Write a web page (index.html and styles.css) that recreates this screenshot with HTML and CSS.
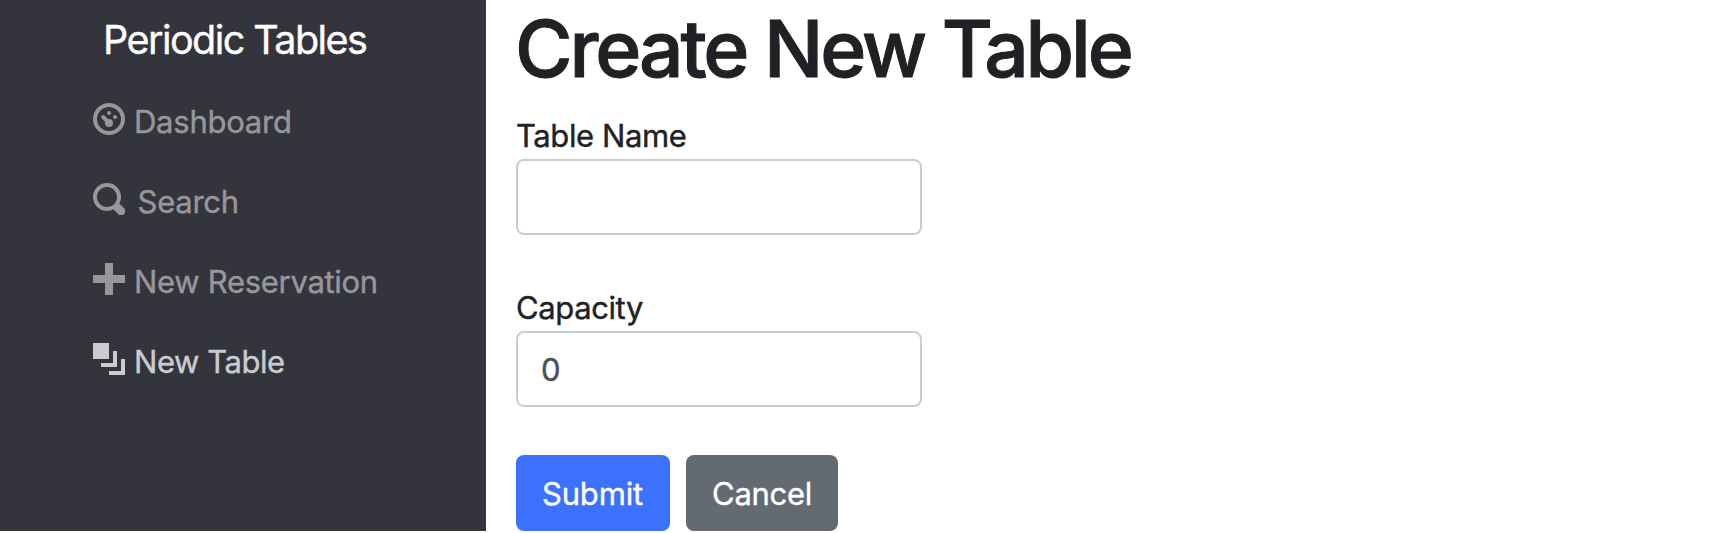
FILE: index.html
```html
<!DOCTYPE html>
<html lang="en">
<head>
<meta charset="utf-8">
<title>Periodic Tables</title>
<link rel="stylesheet" href="styles.css">
</head>
<body>
<div class="layout">
  <nav class="sidebar">
    <a class="brand">Periodic Tables</a>
    <ul class="menu">
      <li class="item"><svg class="icon" viewBox="0 0 8 8"><circle class="line" cx="4" cy="4" r="3.5"/><path class="line needle" d="M2.55 3.5l1.4 1.4"/><circle cx="4" cy="5" r="1"/><circle cx="4" cy="2.5" r=".5"/><circle cx="5.5" cy="3.5" r=".5"/></svg><span class="text dashboard">Dashboard</span></li>
      <li class="item"><svg class="icon" viewBox="0 0 8 8"><path d="M3.5 0c-1.93 0-3.5 1.57-3.5 3.5s1.57 3.5 3.5 3.5c.59 0 1.17-.14 1.66-.41a1 1 0 0 0 .13.13l1 1a1.02 1.02 0 1 0 1.44-1.44l-1-1a1 1 0 0 0-.16-.13c.27-.49.44-1.06.44-1.66 0-1.93-1.55-3.5-3.5-3.5zm0 1c1.39 0 2.5 1.11 2.5 2.5 0 .66-.24 1.27-.66 1.72l-.03.03a1 1 0 0 0-.13.13c-.44.4-1.04.63-1.69.63-1.39 0-2.5-1.11-2.5-2.5s1.11-2.5 2.5-2.5z"/></svg><span class="text search">Search</span></li>
      <li class="item"><svg class="icon" viewBox="0 0 8 8"><path d="M3 0v3h-3v2h3v3h2v-3h3v-2h-3v-3h-2z"/></svg><span class="text reservation">New Reservation</span></li>
      <li class="item active"><svg class="icon" viewBox="0 0 8 8"><path d="M0 0v4h4v-4h-4zm5 2v3h-3v1h4v-4h-1zm2 2v3h-3v1h4v-4h-1z"/></svg><span class="text table">New Table</span></li>
    </ul>
  </nav>
  <main class="content">
    <h1 class="title">Create New Table</h1>
    <form class="form">
      <label class="label name" for="table_name">Table Name</label>
      <input class="field" id="table_name" type="text">
      <label class="label capacity" for="capacity">Capacity</label>
      <input class="field" id="capacity" type="text" value="0">
      <div class="actions">
        <button class="btn submit" type="button">Submit</button>
        <button class="btn cancel" type="button">Cancel</button>
      </div>
    </form>
  </main>
</div>
</body>
</html>
```
FILE: styles.css
```css
* { box-sizing: border-box; }
body {
  margin: 0;
  background: #fff;
  color: #212529;
  font: 400 31px/48px Inter, sans-serif;
  -webkit-text-stroke: .4px currentColor;
  overflow: hidden;
}
.layout { display: flex; height: 531px; }
.sidebar {
  width: 486px;
  flex: none;
  padding-top: 10px;
  background: #34343c;
}
.brand {
  display: block;
  margin-left: 103px;
  font-size: 39.5px;
  line-height: 60px;
  letter-spacing: -1.55px;
  color: #fff;
}
.menu { list-style: none; margin: 12px 0 0; padding: 0 0 0 93px; }
.item {
  display: flex;
  align-items: flex-start;
  height: 80px;
  padding-top: 16px;
  color: #97979b;
}
.active { color: #cbccce; }
.icon { width: 32px; height: 32px; margin-top: 5px; fill: currentColor; }
.line { fill: none; stroke: currentColor; stroke-width: 1; }
.needle { stroke-linecap: round; }
.text { margin-left: 9px; white-space: nowrap; }
.dashboard { letter-spacing: -.25px; }
.search { margin-left: 12.5px; letter-spacing: -.25px; }
.reservation { letter-spacing: -.3px; }
.table { letter-spacing: -.45px; }
.content { padding: 0 0 0 30px; }
.title {
  margin: 0 0 0 -1px;
  padding-top: 1px;
  height: 111px;
  font-size: 78.5px;
  font-weight: 500;
  line-height: 96px;
  letter-spacing: -3.12px;
  color: #202125;
  -webkit-text-stroke-width: 1px;
  white-space: nowrap;
}
.form { display: flex; flex-direction: column; width: 406px; }
.label { display: block; height: 48px; padding-top: 1px; letter-spacing: -.4px; color: #212225; }
.field {
  height: 76px;
  border: 2px solid #c9cdd5;
  border-radius: 8px;
  padding: 0 23px;
  font: inherit;
  color: #495057;
  background: #fff;
  outline: none;
}
.capacity { margin-top: 48px; }
.actions { display: flex; gap: 16px; margin-top: 48px; }
.btn {
  height: 76px;
  border: 0;
  border-radius: 8px;
  padding: 1px 0 0;
  font: inherit;
  letter-spacing: -.15px;
  color: #fff;
}
.submit { width: 154px; padding-right: 1px; background: #3b71fd; }
.cancel { width: 152px; background: #646a71; letter-spacing: -.3px; }
```
